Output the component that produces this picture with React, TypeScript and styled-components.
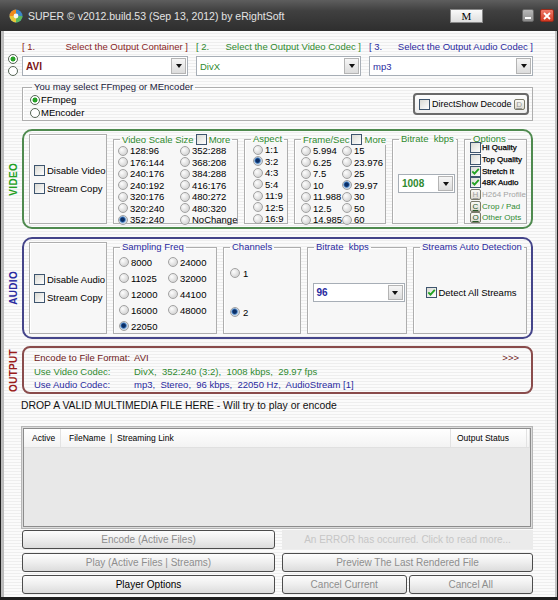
import React from 'react';
import styled, { createGlobalStyle, css } from 'styled-components';

const RED = '#8a1f1f';
const GREEN = '#2f8a2f';
const BLUE = '#2a2aa0';

const GlobalStyle = createGlobalStyle`
    html, body {
        margin: 0;
        padding: 0;
        background: #000;
    }
    body {
        font-family: "Liberation Sans", Arial, sans-serif;
        font-size: 9.5px;
        color: #000;
    }
    * {
        box-sizing: border-box;
    }
`;

const Window = styled.div`
    width: 558px;
    height: 600px;
    display: flex;
    flex-direction: column;
    background: #1f1f1f;
    overflow: hidden;
`;

const TitleBar = styled.div`
    height: 31px;
    flex: none;
    display: flex;
    align-items: center;
    padding: 0 4px 0 9px;
    background: linear-gradient(#5e5e5e, #404040 35%, #2e2e2e);
    color: #e4e4e4;
    font-size: 10.5px;
`;

const TitleText = styled.span`
    margin-left: 5px;
    flex: 1;
`;

const MButton = styled.span`
    width: 33px;
    height: 14px;
    margin-right: 33px;
    display: flex;
    align-items: center;
    justify-content: center;
    background: linear-gradient(#fafafa, #dedede);
    border: 1px solid #888;
    color: #000;
    font-family: "Liberation Serif", serif;
    font-size: 11px;
`;

const CaptionButton = styled.span<{ $close?: boolean }>`
    width: ${({ $close }) => ($close ? 14 : 12)}px;
    height: 13px;
    margin-left: 6px;
    border-radius: 2px;
    display: flex;
    align-items: center;
    justify-content: center;
    background: ${({ $close }) =>
        $close ? 'linear-gradient(#f07a6a, #d23a22)' : 'linear-gradient(#b8b8b8, #8c8c8c)'};
    border: 1px solid ${({ $close }) => ($close ? '#9a2a1a' : '#6a6a6a')};
`;

const Client = styled.div`
    flex: 1;
    margin: 0 1px 3px 1px;
    border-left: 3px solid #bcbcbc;
    border-right: 2px solid #c4c4c4;
    display: flex;
    flex-direction: column;
    background: repeating-linear-gradient(#fbfbfb 0 2px, #eeeeee 2px 3px);
`;

const Section = styled.div<{ $mt: number }>`
    display: flex;
    margin-top: ${({ $mt }) => $mt}px;
    flex: none;
`;

const Gutter = styled.div<{ $end?: boolean }>`
    width: 18px;
    flex: none;
    display: flex;
    flex-direction: column;
    align-items: center;
    justify-content: ${({ $end }) => ($end ? 'flex-end' : 'center')};
    gap: 2px;
`;

const Body = styled.div`
    width: 511px;
    flex: none;
`;

const SelectorGrid = styled.div`
    display: grid;
    grid-template-columns: 166px 165px 164px;
    column-gap: 8px;
    row-gap: 4px;
`;

const SelectLabel = styled.div<{ $color: string }>`
    height: 12px;
    display: flex;
    justify-content: space-between;
    align-items: center;
    color: ${({ $color }) => $color};
    white-space: pre;
`;

const Combo = styled.div<{ $w?: number; $h: number }>`
    width: ${({ $w }) => ($w ? `${$w}px` : '100%')};
    height: ${({ $h }) => $h}px;
    display: flex;
    flex: none;
    background: #fff;
    border: 1px solid #a7aeb6;
`;

const ComboText = styled.span<{ $color: string; $bold?: boolean }>`
    flex: 1;
    display: flex;
    align-items: center;
    padding-left: 3px;
    color: ${({ $color }) => $color};
    font-weight: ${({ $bold }) => ($bold ? 'bold' : 'normal')};
    font-size: ${({ $bold }) => ($bold ? 10 : 9.5)}px;
`;

const ComboButton = styled.span`
    width: 15px;
    margin: 1px;
    display: flex;
    align-items: center;
    justify-content: center;
    background: linear-gradient(#f6f6f6, #dcdcdc);
    border: 1px solid #b4b4b4;
`;

const Arrow = styled.span`
    width: 0;
    height: 0;
    border-left: 3.5px solid transparent;
    border-right: 3.5px solid transparent;
    border-top: 4px solid #111;
`;

const Group = styled.fieldset<{ $w?: number }>`
    margin: 0;
    min-width: 0;
    width: ${({ $w }) => ($w ? `${$w}px` : 'auto')};
    flex: none;
    display: flex;
    flex-direction: column;
    padding: 0 2px 0 4px;
    border: 1px solid #aeaeae;
    box-shadow: inset 1px 1px #fff;
    background: #f7f7f7;
`;

const Legend = styled.legend<{ $color: string }>`
    margin-left: 2px;
    padding: 0 2px;
    line-height: 10px;
    color: ${({ $color }) => $color};
    display: flex;
    align-items: center;
    gap: 2px;
    white-space: pre;
`;

const PlainBox = styled.div<{ $w: number }>`
    width: ${({ $w }) => $w}px;
    flex: none;
    display: flex;
    flex-direction: column;
    justify-content: center;
    gap: 7px;
    padding-left: 4px;
    border: 1px solid #aeaeae;
    box-shadow: inset 1px 1px #fff;
    background: #f7f7f7;
`;

const Item = styled.label<{ $gap?: number }>`
    display: flex;
    align-items: center;
    gap: ${({ $gap }) => $gap ?? 2}px;
    white-space: pre;
`;

const Radio = styled.span<{ $checked?: boolean; $plain?: boolean }>`
    flex: none;
    width: 10px;
    height: 10px;
    border-radius: 50%;
    ${({ $plain, $checked }) =>
        $plain
            ? css`
                  border: 1px solid #566656;
                  background: ${$checked
                      ? 'radial-gradient(circle, #27a227 0 2.2px, #fff 2.8px)'
                      : '#fff'};
              `
            : css`
                  border: 1px solid #a2a2a2;
                  background: ${$checked
                      ? 'radial-gradient(circle at 45% 45%, #0c2f66 0 1.8px, #3d7cc4 2.6px, #c9d6e4 3.6px)'
                      : 'radial-gradient(circle at 35% 35%, #fdfdfd, #d8d8d8 70%, #c4c4c4)'};
              `}
`;

const Box = styled.span`
    flex: none;
    width: 11px;
    height: 11px;
    display: inline-flex;
    align-items: center;
    justify-content: center;
    border: 1px solid #3e556e;
    background: linear-gradient(135deg, #dadad4, #fefefe);
`;

const Check: React.FC<{ checked?: boolean }> = ({ checked }) => (
    <Box>
        {checked && (
            <svg width="9" height="9" viewBox="0 0 9 9">
                <path d="M1.3 4.3 L3.5 6.7 L7.8 1.8" stroke="#22a322" strokeWidth="1.8" fill="none" />
            </svg>
        )}
    </Box>
);

const RadioGrid = styled.div<{ $cols: string; $rows: number; $rowH: number; $mt: number; $pl: number }>`
    display: grid;
    grid-template-columns: ${({ $cols }) => $cols};
    grid-template-rows: repeat(${({ $rows }) => $rows}, ${({ $rowH }) => $rowH}px);
    grid-auto-flow: column;
    align-items: center;
    margin-top: ${({ $mt }) => $mt}px;
    padding-left: ${({ $pl }) => $pl}px;
`;

const Panel = styled.div<{ $color: string; $h: number }>`
    width: 100%;
    height: ${({ $h }) => $h}px;
    display: flex;
    gap: 6px;
    padding: 3px 4px 3px 5px;
    border: 2px solid ${({ $color }) => $color};
    border-radius: 10px;
`;

const SideLabel = styled.span<{ $color: string }>`
    writing-mode: vertical-rl;
    transform: rotate(180deg);
    font-weight: bold;
    font-size: 10px;
    letter-spacing: 0.3px;
    color: ${({ $color }) => $color};
`;

const CenterBox = styled.div<{ $column?: boolean }>`
    flex: 1;
    display: flex;
    flex-direction: ${({ $column }) => ($column ? 'column' : 'row')};
    align-items: ${({ $column }) => ($column ? 'flex-start' : 'center')};
    justify-content: center;
    gap: 28px;
    padding: ${({ $column }) => ($column ? '0 0 0 2px' : '0 0 0 1px')};
`;

const OptionList = styled.div`
    display: grid;
    grid-template-rows: repeat(7, 11.7px);
    align-items: center;
    margin-top: -2px;
    padding-left: 1px;
`;

const OptionText = styled.span<{ $color?: string; $strong?: boolean }>`
    font-size: 8px;
    color: ${({ $color }) => $color ?? '#000'};
    -webkit-text-stroke: ${({ $strong }) => ($strong ? '0.25px #000' : '0')};
`;

const LetterKey = styled.span<{ $color: string }>`
    width: 11px;
    height: 11px;
    flex: none;
    display: inline-flex;
    align-items: center;
    justify-content: center;
    border: 1px solid #7a7a6a;
    border-radius: 2px;
    background: linear-gradient(#fafaf6, #dedcd2);
    color: ${({ $color }) => $color};
    font-size: 8px;
    text-decoration: underline;
`;

const EngineGroup = styled(Group)`
    width: 511px;
    height: 39px;
    flex-direction: row;
    justify-content: space-between;
    align-items: flex-start;
    padding: 0 3px 0 7px;
    background: transparent;
`;

const EngineList = styled.div`
    display: grid;
    grid-template-rows: repeat(2, 13px);
    align-items: center;
    margin-top: 1px;
`;

const DirectShow = styled.div`
    width: 116px;
    height: 22px;
    margin-top: 1px;
    display: flex;
    align-items: center;
    gap: 2px;
    padding: 0 3px 0 4px;
    border: 2px solid #6a6a6a;
    border-radius: 4px;
    background: linear-gradient(#fdfdfd, #eeeeee);
`;

const DirectShowText = styled.span`
    flex: 1;
    font-size: 9px;
    white-space: nowrap;
`;

const OutputPanel = styled.div`
    width: 100%;
    height: 48px;
    padding: 3px 12px 0 10px;
    border: 2px solid #8a4c4c;
    border-radius: 8px;
    display: grid;
    grid-template-columns: 100px 1fr auto;
    grid-auto-rows: 13.5px;
    align-items: center;
    white-space: pre;
`;

const OutText = styled.span<{ $color: string }>`
    color: ${({ $color }) => $color};
`;

const DropText = styled.div`
    margin: 6px 0 0 17px;
    height: 12px;
    line-height: 12px;
    font-size: 10.4px;
    color: #111;
`;

const ListView = styled.div`
    margin: 14px 0 0 17px;
    width: 512px;
    height: 103px;
    border: 1px solid #b6b6b6;
    padding: 1px;
    background: #dcdcdc;
    flex: none;
`;

const ListInner = styled.div`
    height: 100%;
    border: 1px solid #8c8c8c;
    background: #e8e8e8;
`;

const ListHeader = styled.div`
    height: 19px;
    display: grid;
    grid-template-columns: 37px 1fr 76px 3px;
    background: linear-gradient(#ffffff, #f3f3f3);
    border-bottom: 1px solid #e0e0e0;
    font-size: 8.5px;
`;

const HeaderCell = styled.span<{ $pl: number }>`
    display: flex;
    align-items: center;
    padding-left: ${({ $pl }) => $pl}px;
    border-right: 1px solid #e2e2e2;
    white-space: pre;
`;

const ButtonGrid = styled.div`
    margin: 1px 0 0 18px;
    width: 511px;
    display: grid;
    grid-template-columns: 253px 251px;
    grid-template-rows: repeat(3, 19px);
    column-gap: 7px;
    row-gap: 3.5px;
    flex: none;
`;

const Button = styled.button<{ $active?: boolean }>`
    margin: 0;
    padding: 0;
    width: 100%;
    height: 100%;
    font-family: inherit;
    font-size: 10px;
    color: ${({ $active }) => ($active ? '#000' : '#8e8e8e')};
    background: linear-gradient(#fdfdfd, #eeeeee 50%, #dcdcdc);
    border: 1px solid #4c4c4c;
    border-radius: 3px;
`;

const ErrorLabel = styled.div`
    display: flex;
    align-items: center;
    justify-content: center;
    background: #ebebeb;
    color: #c6c6c6;
    font-size: 10px;
`;

const SplitButtons = styled.div`
    display: grid;
    grid-template-columns: 1fr 1fr;
    column-gap: 2px;
`;

const AppIcon = () => (
    <svg width="14" height="14" viewBox="0 0 14 14">
        <circle cx="7" cy="7" r="6.5" fill="#3d86c6" />
        <path d="M7 0.5 A6.5 6.5 0 0 0 0.5 7 L7 7 Z" fill="#f08a1c" />
        <path d="M13.5 7 A6.5 6.5 0 0 1 7 13.5 L7 7 Z" fill="#5cb85c" />
        <path d="M0.5 7 A6.5 6.5 0 0 0 7 13.5 L7 7 Z" fill="#e8c83a" />
        <circle cx="7" cy="7" r="2.4" fill="#f4f4f4" />
    </svg>
);

const scaleSizes = [
    '128:96', '176:144', '240:176', '240:192', '320:176', '320:240', '352:240',
    '352:288', '368:208', '384:288', '416:176', '480:272', '480:320', 'NoChange',
];
const aspects = ['1:1', '3:2', '4:3', '5:4', '11:9', '12:5', '16:9'];
const fps = [
    '5.994', '6.25', '7.5', '10', '11.988', '12.5', '14.985',
    '15', '23.976', '25', '29.97', '30', '50', '60',
];
const freqs = ['8000', '11025', '12000', '16000', '22050', '24000', '32000', '44100', '48000'];

const RadioSet: React.FC<{
    items: string[];
    selected: string;
    cols: string;
    rows: number;
    rowH: number;
    mt?: number;
    pl?: number;
}> = ({ items, selected, cols, rows, rowH, mt = 0, pl = 0 }) => (
    <RadioGrid $cols={cols} $rows={rows} $rowH={rowH} $mt={mt} $pl={pl}>
        {items.map((it) => (
            <Item key={it}>
                <Radio $checked={it === selected} />
                {it}
            </Item>
        ))}
    </RadioGrid>
);

const App: React.FC = () => {
    return (
        <Window>
            <GlobalStyle />
            <TitleBar>
                <AppIcon />
                <TitleText>SUPER © v2012.build.53 (Sep 13, 2012) by eRightSoft</TitleText>
                <MButton>M</MButton>
                <CaptionButton>
                    <svg width="6" height="6" viewBox="0 0 6 6">
                        <rect x="0" y="4" width="6" height="2" fill="#fff" />
                    </svg>
                </CaptionButton>
                <CaptionButton $close>
                    <svg width="8" height="8" viewBox="0 0 8 8">
                        <path d="M1 1 L7 7 M7 1 L1 7" stroke="#fff" strokeWidth="1.8" />
                    </svg>
                </CaptionButton>
            </TitleBar>

            <Client>
                <Section $mt={9}>
                    <Gutter $end>
                        <Radio $plain $checked />
                        <Radio $plain />
                    </Gutter>
                    <Body>
                        <SelectorGrid>
                            <SelectLabel $color={RED}>
                                <span>[ 1.</span>
                                <span>Select the Output Container ]</span>
                            </SelectLabel>
                            <SelectLabel $color={GREEN}>
                                <span>[ 2.</span>
                                <span>Select the Output Video Codec ]</span>
                            </SelectLabel>
                            <SelectLabel $color={BLUE}>
                                <span>[ 3.</span>
                                <span>Select the Output Audio Codec ]</span>
                            </SelectLabel>
                            <Combo $h={20}>
                                <ComboText $color="#7a1414" $bold>AVI</ComboText>
                                <ComboButton><Arrow /></ComboButton>
                            </Combo>
                            <Combo $h={20}>
                                <ComboText $color={GREEN}>DivX</ComboText>
                                <ComboButton><Arrow /></ComboButton>
                            </Combo>
                            <Combo $h={20}>
                                <ComboText $color={BLUE}>mp3</ComboText>
                                <ComboButton><Arrow /></ComboButton>
                            </Combo>
                        </SelectorGrid>
                    </Body>
                </Section>

                <Section $mt={6}>
                    <Gutter />
                    <EngineGroup>
                        <Legend $color="#1a1a3a">You may select FFmpeg or MEncoder</Legend>
                        <EngineList>
                            <Item $gap={1}>
                                <Radio $plain $checked />
                                FFmpeg
                            </Item>
                            <Item $gap={1}>
                                <Radio $plain />
                                MEncoder
                            </Item>
                        </EngineList>
                        <DirectShow>
                            <Check />
                            <DirectShowText>DirectShow Decode</DirectShowText>
                            <LetterKey $color="#9a9a9a">D</LetterKey>
                        </DirectShow>
                    </EngineGroup>
                </Section>

                <Section $mt={8}>
                    <Gutter>
                        <SideLabel $color="#23a023">VIDEO</SideLabel>
                    </Gutter>
                    <Body>
                        <Panel $color="#4f8a4f" $h={100}>
                            <PlainBox $w={78}>
                                <Item><Check />Disable Video</Item>
                                <Item><Check />Stream Copy</Item>
                            </PlainBox>
                            <Group $w={125}>
                                <Legend $color={GREEN}>
                                    Video Scale Size<Check />More
                                </Legend>
                                <RadioSet items={scaleSizes} selected="352:240" cols="62px 1fr" rows={7} rowH={11.5} />
                            </Group>
                            <Group $w={44}>
                                <Legend $color={GREEN}>Aspect</Legend>
                                <RadioSet items={aspects} selected="3:2" cols="1fr" rows={7} rowH={11.5} pl={4} />
                            </Group>
                            <Group $w={92}>
                                <Legend $color={GREEN}>
                                    Frame/Sec<Check />More
                                </Legend>
                                <RadioSet items={fps} selected="29.97" cols="41px 1fr" rows={7} rowH={11.5} pl={2} />
                            </Group>
                            <Group $w={66}>
                                <Legend $color={GREEN}>Bitrate  kbps</Legend>
                                <CenterBox>
                                    <Combo $w={57} $h={19}>
                                        <ComboText $color={GREEN} $bold>1008</ComboText>
                                        <ComboButton><Arrow /></ComboButton>
                                    </Combo>
                                </CenterBox>
                            </Group>
                            <Group $w={63}>
                                <Legend $color={GREEN}>Options</Legend>
                                <OptionList>
                                    <Item $gap={1}><Check /><OptionText $strong>Hi Quality</OptionText></Item>
                                    <Item $gap={1}><Check /><OptionText $strong>Top Quality</OptionText></Item>
                                    <Item $gap={1}><Check checked /><OptionText $strong>Stretch It</OptionText></Item>
                                    <Item $gap={1}><Check checked /><OptionText $strong>48K Audio</OptionText></Item>
                                    <Item $gap={1}>
                                        <LetterKey $color="#a0a0a0">H</LetterKey>
                                        <OptionText $color="#a4a4a4">H264 Profile</OptionText>
                                    </Item>
                                    <Item $gap={1}>
                                        <LetterKey $color="#2a5a2a">C</LetterKey>
                                        <OptionText $color={GREEN}>Crop / Pad</OptionText>
                                    </Item>
                                    <Item $gap={1}>
                                        <LetterKey $color="#2a5a2a">O</LetterKey>
                                        <OptionText $color={GREEN}>Other Opts</OptionText>
                                    </Item>
                                </OptionList>
                            </Group>
                        </Panel>
                    </Body>
                </Section>

                <Section $mt={8}>
                    <Gutter>
                        <SideLabel $color={BLUE}>AUDIO</SideLabel>
                    </Gutter>
                    <Body>
                        <Panel $color="#45458a" $h={102}>
                            <PlainBox $w={78}>
                                <Item><Check />Disable Audio</Item>
                                <Item><Check />Stream Copy</Item>
                            </PlainBox>
                            <Group $w={104}>
                                <Legend $color={BLUE}>Sampling Freq</Legend>
                                <RadioSet items={freqs} selected="22050" cols="49px 1fr" rows={5} rowH={16} mt={2} pl={1} />
                            </Group>
                            <Group $w={78}>
                                <Legend $color={BLUE}>Channels</Legend>
                                <CenterBox $column>
                                    <Item $gap={3}><Radio />1</Item>
                                    <Item $gap={3}><Radio $checked />2</Item>
                                </CenterBox>
                            </Group>
                            <Group $w={100}>
                                <Legend $color={BLUE}>Bitrate  kbps</Legend>
                                <CenterBox>
                                    <Combo $w={92} $h={19}>
                                        <ComboText $color={BLUE} $bold>96</ComboText>
                                        <ComboButton><Arrow /></ComboButton>
                                    </Combo>
                                </CenterBox>
                            </Group>
                            <Group $w={114}>
                                <Legend $color={BLUE}>Streams Auto Detection</Legend>
                                <CenterBox>
                                    <Item $gap={1}><Check checked />Detect All Streams</Item>
                                </CenterBox>
                            </Group>
                        </Panel>
                    </Body>
                </Section>

                <Section $mt={7}>
                    <Gutter>
                        <SideLabel $color="#9a1c1c">OUTPUT</SideLabel>
                    </Gutter>
                    <Body>
                        <OutputPanel>
                            <OutText $color="#6e1a1a">Encode to File Format:</OutText>
                            <OutText $color="#6e1a1a">AVI</OutText>
                            <OutText $color="#6e1a1a">{'>>>'}</OutText>
                            <OutText $color={GREEN}>Use Video Codec:</OutText>
                            <OutText $color={GREEN}>DivX,  352:240 (3:2),  1008 kbps,  29.97 fps</OutText>
                            <span />
                            <OutText $color={BLUE}>Use Audio Codec:</OutText>
                            <OutText $color={BLUE}>mp3,  Stereo,  96 kbps,  22050 Hz,  AudioStream [1]</OutText>
                            <span />
                        </OutputPanel>
                    </Body>
                </Section>

                <DropText>DROP A VALID MULTIMEDIA FILE HERE - Will try to play or encode</DropText>

                <ListView>
                    <ListInner>
                        <ListHeader>
                            <HeaderCell $pl={8}>Active</HeaderCell>
                            <HeaderCell $pl={8}>FileName  |  Streaming Link</HeaderCell>
                            <HeaderCell $pl={6}>Output Status</HeaderCell>
                            <HeaderCell $pl={0} />
                        </ListHeader>
                    </ListInner>
                </ListView>

                <ButtonGrid>
                    <Button>Encode (Active Files)</Button>
                    <ErrorLabel>An ERROR has occurred. Click to read more...</ErrorLabel>
                    <Button>Play (Active Files | Streams)</Button>
                    <Button>Preview The Last Rendered File</Button>
                    <Button $active>Player Options</Button>
                    <SplitButtons>
                        <Button>Cancel Current</Button>
                        <Button>Cancel All</Button>
                    </SplitButtons>
                </ButtonGrid>
            </Client>
        </Window>
    );
};

export default App;
